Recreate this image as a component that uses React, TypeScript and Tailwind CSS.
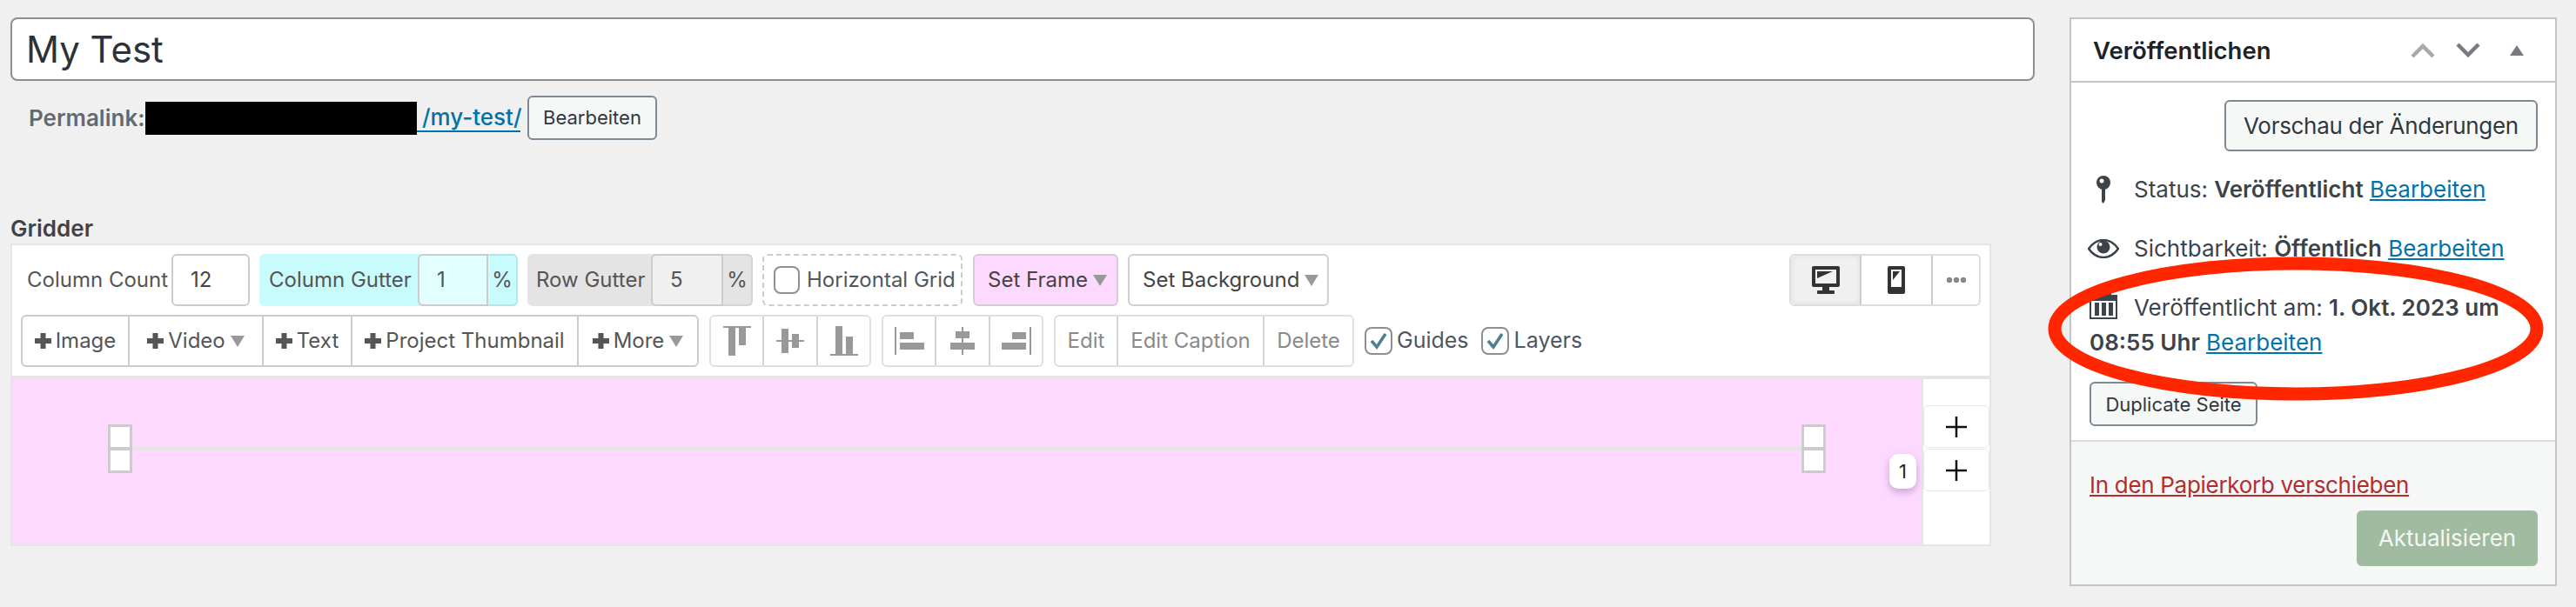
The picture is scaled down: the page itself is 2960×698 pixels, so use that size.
import React from 'react';

function Tri({ className = 'ml-[6px]' }: { className?: string }) {
  return (
    <svg width="16" height="13" viewBox="0 0 16 13" className={className}>
      <polygon points="0,0 16,0 8,13" fill="#999" />
    </svg>
  );
}

function Plus() {
  return (
    <svg width="19" height="18" viewBox="0 0 19 18" className="mr-[5px] shrink-0">
      <path d="M6.5 0h6v6H19v6h-6.500v6h-6v-6H0V6h6.500z" fill="#555" />
    </svg>
  );
}

function Check() {
  return (
    <span className="flex h-[32px] w-[32px] items-center justify-center rounded-[8px] border-2 border-[#8c8f94] bg-white">
      <svg width="24" height="22" viewBox="0 0 24 22">
        <path d="M4 11l6 7L20 3" fill="none" stroke="#4f7f95" strokeWidth="3.500" />
      </svg>
    </span>
  );
}

function Handle() {
  return (
    <div className="flex h-[56px] w-[28px] shrink-0 flex-col border-[3px] border-[#cccccc] bg-white">
      <div className="flex-1" />
      <div className="h-[4px] bg-[#cccccc]" />
      <div className="flex-1" />
    </div>
  );
}

function AddRow() {
  return (
    <div className="flex h-[49px] items-center justify-center rounded-[6px] border border-[#e8e8e8] bg-white">
      <svg width="26" height="26" viewBox="0 0 26 26">
        <path d="M13 1v24M1 13h24" stroke="#111" strokeWidth="2.500" />
      </svg>
    </div>
  );
}

export default function App() {
  return (
    <div className="relative flex h-[698px] w-[2960px] overflow-hidden bg-[#f0f0f1] font-['Inter',sans-serif]">
      {/* Main column */}
      <div className="ml-[12px] w-[2326px]">
        <input
          readOnly
          value="My Test"
          className="mt-[20px] h-[73px] w-full rounded-[8px] border-2 border-[#8c8f94] bg-white px-[16px] text-[42px] text-[#2c3338] outline-none"
        />

        <div className="mt-[17px] ml-[21px] flex h-[51px] items-center text-[26px]">
          <span className="w-[134px] font-semibold text-[#646970]">Permalink:</span>
          <span className="h-[38px] w-[312px] bg-black" />
          <a className="w-[119px] border-b-2 border-[#0073aa] pl-[6px] leading-[30px] font-medium whitespace-nowrap text-[#0073aa]">/my-test/</a>
          <button className="ml-[8px] h-[51px] w-[149px] rounded-[6px] border-2 border-[#7e8993] bg-[#f6f7f7] text-[22px] text-[#32373c]">
            Bearbeiten
          </button>
        </div>

        <h2 className="mt-[87px] h-[30px] text-[26px] leading-[30px] font-semibold text-[#3c434a]">Gridder</h2>

        {/* Gridder panel */}
        <div className="mt-[2px] w-[2276px] border-2 border-[#e5e5e5] bg-white">
          <div className="flex flex-col gap-[10px] border-b-4 border-[#e5e5e5] px-[10px] pt-[10px] pb-[10px] text-[24px] text-[#555555]">
            <div className="flex h-[60px] items-stretch">
              <div className="flex w-[173px] items-center pl-[7px]">Column Count</div>
              <div className="flex w-[90px] items-center rounded-[6px] border-2 border-[#cccccc] pl-[20px] text-[#444]">12</div>

              <div className="ml-[11px] flex w-[297px] rounded-[6px] bg-[#c8fbfb]">
                <div className="flex w-[182px] items-center pl-[11px]">Column Gutter</div>
                <div className="flex w-[81px] items-center rounded-l-[6px] border-2 border-[#cccccc] bg-[#e2ffff] pl-[20px]">1</div>
                <div className="flex flex-1 items-center justify-center rounded-r-[6px] border-y-2 border-r-2 border-[#b5e6e6]">%</div>
              </div>

              <div className="ml-[11px] flex w-[259px] rounded-[6px] bg-[#e4e4e4]">
                <div className="flex w-[142px] items-center pl-[10px]">Row Gutter</div>
                <div className="flex w-[83px] items-center rounded-l-[6px] border-2 border-[#cccccc] bg-[#f0f0f0] pl-[20px]">5</div>
                <div className="flex flex-1 items-center justify-center rounded-r-[6px] border-y-2 border-r-2 border-[#d4d4d4]">%</div>
              </div>

              <div className="ml-[11px] flex w-[230px] items-center rounded-[6px] border-2 border-dashed border-[#cccccc] pl-[11px] text-[#50575e]">
                <span className="mr-[8px] h-[32px] w-[30px] rounded-[8px] border-2 border-[#8c8f94]" />
                Horizontal Grid
              </div>

              <div className="ml-[12px] flex w-[167px] items-center rounded-[6px] border-2 border-[#d0d0d0] bg-[#fed9ff] pl-[15px] text-[#444]">
                Set Frame
                <Tri />
              </div>

              <div className="ml-[11px] flex w-[231px] items-center rounded-[6px] border-2 border-[#d0d0d0] pl-[15px] text-[#444]">
                Set Background
                <Tri />
              </div>

              <div className="ml-auto flex w-[220px] rounded-[6px] border-2 border-[#dddddd]">
                <div className="flex w-[81px] items-center justify-center rounded-l-[5px] border-r-2 border-[#cccccc] bg-[#f0f0f0] shadow-[inset_0_0_6px_rgba(0,0,0,0.08)]">
                  <svg width="32" height="32" viewBox="0 0 32 32">
                    <rect width="32" height="24" rx="2" fill="#333" />
                    <rect x="4" y="4" width="24" height="16" fill="#f0f0f0" />
                    <polygon points="6,6 24,6 6,14" fill="#333" />
                    <rect x="12" y="24" width="8" height="4" fill="#333" />
                    <rect x="6" y="28" width="20" height="4" rx="1" fill="#333" />
                  </svg>
                </div>
                <div className="flex w-[82px] items-center justify-center border-r-2 border-[#cccccc]">
                  <svg width="20" height="32" viewBox="0 0 20 32">
                    <rect width="20" height="32" rx="2" fill="#333" />
                    <rect x="4" y="4" width="12" height="20" fill="#fff" />
                    <polygon points="6,6 14,6 6,16" fill="#333" />
                  </svg>
                </div>
                <div className="flex flex-1 items-center justify-center">
                  <svg width="24" height="8" viewBox="0 0 24 8">
                    <circle cx="4" cy="4" r="3.200" fill="#888" />
                    <circle cx="12" cy="4" r="3.200" fill="#888" />
                    <circle cx="20" cy="4" r="3.200" fill="#888" />
                  </svg>
                </div>
              </div>
            </div>

            <div className="flex h-[60px] items-stretch">
              <div className="flex w-[779px] rounded-[6px] border-2 border-[#cccccc]">
                <div className="flex w-[123px] items-center justify-center border-r-2 border-[#cccccc]"><Plus />Image</div>
                <div className="flex w-[154px] items-center justify-center border-r-2 border-[#cccccc]"><Plus />Video<Tri /></div>
                <div className="flex w-[102px] items-center justify-center border-r-2 border-[#cccccc]"><Plus />Text</div>
                <div className="flex w-[260px] items-center justify-center border-r-2 border-[#cccccc]"><Plus />Project Thumbnail</div>
                <div className="flex flex-1 items-center justify-center"><Plus />More<Tri /></div>
              </div>

              <div className="ml-[12px] flex w-[186px] rounded-[6px] border-2 border-[#e0e0e0]">
                <div className="flex w-[61px] items-center justify-center border-r-2 border-[#d4d4d4]">
                  <svg width="32" height="34" viewBox="0 0 32 34" fill="#999">
                    <rect width="32" height="2" />
                    <rect x="6" y="2" width="8" height="32" />
                    <rect x="18" y="2" width="8" height="20" />
                  </svg>
                </div>
                <div className="flex w-[62px] items-center justify-center border-r-2 border-[#d4d4d4]">
                  <svg width="32" height="28" viewBox="0 0 32 28" fill="#999">
                    <rect y="13" width="32" height="2" />
                    <rect x="6" width="8" height="28" />
                    <rect x="18" y="6" width="8" height="16" />
                  </svg>
                </div>
                <div className="flex flex-1 items-center justify-center">
                  <svg width="32" height="34" viewBox="0 0 32 34" fill="#999">
                    <rect y="32" width="32" height="2" />
                    <rect x="6" width="8" height="32" />
                    <rect x="18" y="12" width="8" height="20" />
                  </svg>
                </div>
              </div>

              <div className="ml-[12px] flex w-[186px] rounded-[6px] border-2 border-[#e0e0e0]">
                <div className="flex w-[61px] items-center justify-center border-r-2 border-[#d4d4d4]">
                  <svg width="34" height="32" viewBox="0 0 34 32" fill="#999">
                    <rect width="2" height="32" />
                    <rect x="6" y="6" width="16" height="8" />
                    <rect x="6" y="18" width="28" height="8" />
                  </svg>
                </div>
                <div className="flex w-[62px] items-center justify-center border-r-2 border-[#d4d4d4]">
                  <svg width="28" height="32" viewBox="0 0 28 32" fill="#999">
                    <rect x="13" width="2" height="32" />
                    <rect x="6" y="5" width="16" height="8" />
                    <rect y="18" width="28" height="8" />
                  </svg>
                </div>
                <div className="flex flex-1 items-center justify-center">
                  <svg width="34" height="32" viewBox="0 0 34 32" fill="#999">
                    <rect x="32" width="2" height="32" />
                    <rect x="12" y="6" width="16" height="8" />
                    <rect y="18" width="28" height="8" />
                  </svg>
                </div>
              </div>

              <div className="ml-[12px] flex w-[345px] rounded-[6px] border-2 border-[#e0e0e0] text-[#8a8a8a]">
                <div className="flex w-[72px] items-center justify-center border-r-2 border-[#d4d4d4]">Edit</div>
                <div className="flex w-[168px] items-center justify-center border-r-2 border-[#d4d4d4]">Edit Caption</div>
                <div className="flex flex-1 items-center justify-center">Delete</div>
              </div>

              <div className="ml-[12px] flex items-center gap-[5px] text-[25px] text-[#50575e]">
                <Check />
                Guides
              </div>
              <div className="ml-[14px] flex items-center gap-[6px] text-[25px] text-[#50575e]">
                <Check />
                Layers
              </div>
            </div>
          </div>

          {/* Canvas */}
          <div className="flex h-[190px]">
            <div className="relative w-[2194px] bg-[#fed9ff] pt-[52px] pl-[110px]">
              <div className="flex w-[1974px] items-center">
                <Handle />
                <div className="h-[4px] flex-1 bg-[#e5e5e5]" />
                <Handle />
              </div>
              <div className="absolute top-[86px] right-[6px] flex h-[40px] w-[31px] items-center justify-center rounded-[10px] bg-white text-[22px] text-[#222] shadow-[0_4px_8px_rgba(110,60,120,0.35)]">
                1
              </div>
            </div>
            <div className="flex-1 border-l-2 border-[#e5e5e5] pt-[30px]">
              <AddRow />
              <div className="mt-[1px]">
                <AddRow />
              </div>
            </div>
          </div>
        </div>
      </div>

      {/* Publish box */}
      <div className="mt-[20px] ml-[40px] h-[654px] w-[560px] border-2 border-[#c3c4c7] bg-white text-[26px] leading-[40px] text-[#3c434a]">
        <div className="flex h-[73px] items-center border-b-2 border-[#c3c4c7] pr-[36px] pl-[25px]">
          <span className="text-[27.500px] font-semibold text-[#1d2327]">Veröffentlichen</span>
          <svg width="28" height="18" viewBox="0 0 28 18" className="ml-auto">
            <path d="M2 16L14 4l12 12" fill="none" stroke="#a7aaad" strokeWidth="4.500" />
          </svg>
          <svg width="28" height="18" viewBox="0 0 28 18" className="ml-[24px]">
            <path d="M2 2l12 12L26 2" fill="none" stroke="#787c82" strokeWidth="4.500" />
          </svg>
          <svg width="16" height="12" viewBox="0 0 16 12" className="ml-[34px]">
            <polygon points="8,0 16,12 0,12" fill="#787c82" />
          </svg>
        </div>

        <div className="flex h-[413px] flex-col border-b-2 border-[#dcdcde] pr-[20px] pl-[21px]">
          <button className="mt-[20px] ml-auto h-[59px] w-[360px] shrink-0 rounded-[6px] border-2 border-[#7e8993] bg-[#f6f7f7] text-[26px] tracking-[-0.3px] text-[#32373c]">
            Vorschau der Änderungen
          </button>

          <div className="mt-[24px] flex items-center">
            <span className="mr-[19px] flex w-[32px] justify-center">
              <svg width="16" height="32" viewBox="0 0 16 32">
                <circle cx="8" cy="8" r="8" fill="#3c434a" />
                <circle cx="6" cy="6" r="2.500" fill="#fff" />
                <path d="M6 14h4v14l-2 4-2-2z" fill="#3c434a" />
              </svg>
            </span>
            <span>
              Status: <b className="font-semibold">Veröffentlicht</b> <a className="text-[#0073aa] underline">Bearbeiten</a>
            </span>
          </div>

          <div className="mt-[28px] flex items-center">
            <span className="mr-[19px] flex w-[32px] justify-center">
              <svg width="36" height="22" viewBox="0 0 36 22" className="shrink-0">
                <path d="M1 11C6 4 12 1 18 1s12 3 17 10c-5 7-11 10-17 10S6 18 1 11z" fill="none" stroke="#3c434a" strokeWidth="2.500" />
                <circle cx="18" cy="9" r="7.500" fill="#3c434a" />
                <circle cx="14.500" cy="6" r="2" fill="#fff" />
              </svg>
            </span>
            <span>
              Sichtbarkeit: <b className="font-semibold">Öffentlich</b> <a className="text-[#0073aa] underline">Bearbeiten</a>
            </span>
          </div>

          <div className="mt-[28px]">
            <span className="mr-[19px] inline-block w-[32px] align-[-4px]">
              <svg width="32" height="32" viewBox="0 0 32 32">
                <path d="M0 4h7V0h3v4h12V0h3v4h7v28H0z" fill="#3c434a" />
                <rect x="2" y="11" width="28" height="19" fill="#fff" />
                <rect x="6" y="13" width="5" height="15" fill="#3c434a" />
                <rect x="14" y="13" width="5" height="15" fill="#3c434a" />
                <rect x="22" y="13" width="5" height="15" fill="#3c434a" />
              </svg>
            </span>
            Veröffentlicht am: <b className="font-semibold">1. Okt. 2023 um</b> <b className="font-semibold">08:55 Uhr</b>{' '}
            <a className="text-[#0073aa] underline">Bearbeiten</a>
          </div>

          <button className="mt-[25px] h-[51px] w-[193px] shrink-0 rounded-[6px] border-2 border-[#7e8993] bg-[#f6f7f7] text-[22px] text-[#32373c]">
            Duplicate Seite
          </button>
        </div>

        <div className="flex h-[164px] flex-col bg-[#f6f7f7] pr-[20px] pl-[21px]">
          <a className="mt-[30px] tracking-[-0.3px] text-[#b32d2e] underline">In den Papierkorb verschieben</a>
          <button className="mt-[9px] ml-auto h-[64px] w-[208px] rounded-[6px] bg-[#a0bba0] text-[26px] text-[#f4f7f4]">
            Aktualisieren
          </button>
        </div>
      </div>

      {/* Red annotation drawn over the page */}
      <svg width="570" height="166" viewBox="0 0 570 166" className="absolute top-[295px] left-[2353px]">
        <ellipse cx="285" cy="83" rx="277" ry="75" fill="none" stroke="#ff2600" strokeWidth="15" />
      </svg>
    </div>
  );
}
